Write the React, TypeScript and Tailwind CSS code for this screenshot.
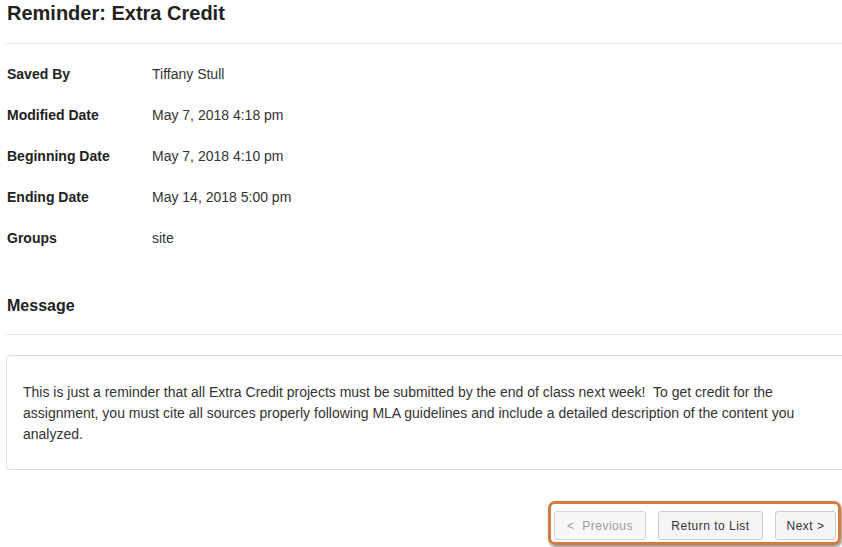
import React from 'react';

const rows = [
  { label: 'Saved By', value: 'Tiffany Stull' },
  { label: 'Modified Date', value: 'May 7, 2018 4:18 pm' },
  { label: 'Beginning Date', value: 'May 7, 2018 4:10 pm' },
  { label: 'Ending Date', value: 'May 14, 2018 5:00 pm' },
  { label: 'Groups', value: 'site' },
];

export default function App() {
  return (
    <div
      className="w-[842px] h-[547px] overflow-hidden bg-white text-[#333]"
      style={{ fontFamily: '"Liberation Sans", Arial, sans-serif' }}
    >
      <div className="w-[900px] pl-[6px]">
        {/* Title */}
        <h2 className="text-[20px] leading-[26px] font-bold text-[#222] pl-px">Reminder: Extra Credit</h2>
        <div className="mt-[17px] h-px bg-[#e8e8e8]" />

        {/* Details */}
        <div className="mt-[10px]">
          {rows.map(r => (
            <div key={r.label} className="flex h-[41px] items-center text-[14px]">
              <div className="w-[146px] pl-px font-bold text-[#222]">{r.label}</div>
              <div className="text-[#333]">{r.value}</div>
            </div>
          ))}
        </div>

        {/* Message */}
        <h3 className="mt-[37px] text-[16px] leading-[20px] font-bold text-[#222] pl-px">Message</h3>
        <div className="mt-[18px] h-px bg-[#e8e8e8]" />

        <div className="mt-[20px] border border-[#ddd] rounded-[4px] pt-[26px] pb-[24px] pl-[16px] pr-[40px]">
          <p className="w-[800px] text-[14px] leading-[21px] text-[#333]">
            This is just a reminder that all Extra Credit projects must be submitted by the end of class next week!&nbsp; To get credit for the assignment, you must cite all sources properly following MLA guidelines and include a detailed description of the content you analyzed.
          </p>
        </div>
      </div>

      {/* Pager */}
      <div className="mt-[31px] flex justify-end pr-px">
        <div className="flex gap-[12px] border-[3px] border-[#d67b3c] rounded-[7px] pt-[7px] pb-[2px] pl-[3px] pr-[2px] shadow-[1px_2px_3px_rgba(0,0,0,0.45)]">
          <button className="h-[29px] w-[92px] rounded-[3px] border border-[#d6d6d6] bg-[#f8f8f8] text-[12px] tracking-[0.5px] text-[#999]">
            &lt;&nbsp; Previous
          </button>
          <button className="h-[29px] w-[105px] rounded-[3px] border border-[#ccc] bg-[#f5f5f5] text-[12px] tracking-[0.5px] text-[#333]">
            Return to List
          </button>
          <button className="h-[29px] w-[61px] rounded-[3px] border border-[#ccc] bg-[#f5f5f5] text-[12px] tracking-[0.5px] text-[#333]">
            Next &gt;
          </button>
        </div>
      </div>
    </div>
  );
}
